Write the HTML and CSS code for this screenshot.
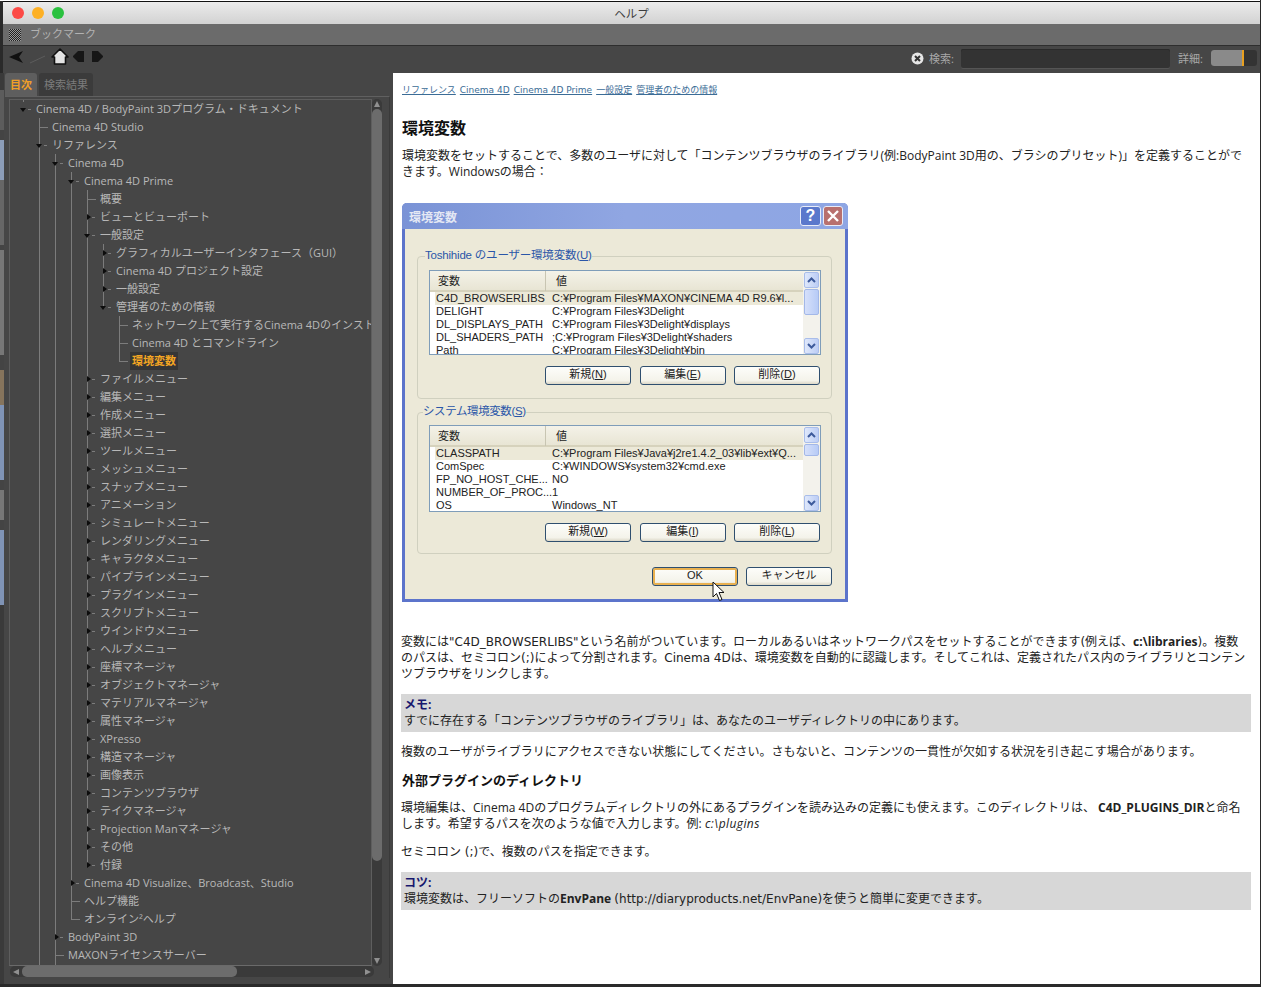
FILE: index.html
```html
<!DOCTYPE html>
<html lang="ja">
<head>
    <meta charset="UTF-8">
    <title>ヘルプ</title>
    <link rel="stylesheet" href="styles.css">
</head>
<body>
<div class="window">
    <div class="titlebar">
        <div class="lights"><span class="light red"></span><span class="light yellow"></span><span class="light green"></span></div>
        <div class="title-text">ヘルプ</div>
    </div>
    <div class="bookmarks"><span class="grip"></span><span>ブックマーク</span></div>
    <div class="toolbar">
        <svg class="nav-icons" width="100" height="20" viewBox="0 0 100 20">
            <path d="M1 9 L15 3 L11 9 L15 15 Z" fill="#111"/>
            <path d="M22 15 L37 8" stroke="#5c5c5c" stroke-width="1" fill="none"/>
            <path d="M52 1 L60 9 L57.5 9 L57.5 16 L46.5 16 L46.5 9 L44 9 Z" fill="#e4e4e4" stroke="#111" stroke-width="1.6" stroke-linejoin="round"/>
            <path d="M65 8 L70 3 L76 3 L76 14 L70 14 L65 9 Z" fill="#161616"/>
            <path d="M84 3 L90 3 L95 8 L95 9 L90 14 L84 14 Z" fill="#161616"/>
        </svg>
        <div class="search">
            <svg class="clear" width="13" height="13" viewBox="0 0 13 13"><circle cx="6.5" cy="6.5" r="6" fill="#e6e6e6"/><path d="M4 4 L9 9 M9 4 L4 9" stroke="#333" stroke-width="2"/></svg>
            <span class="search-label">検索:</span>
            <div class="search-input"></div>
            <span class="detail-label">詳細:</span>
            <div class="slider"><div class="slider-fill"></div></div>
        </div>
    </div>
    <div class="main">
        <div class="side">
            <div class="tabs">
                <div class="tab active">目次</div>
                <div class="tab">検索結果</div>
            </div>
            <div class="side-frame">
                <div class="tree-row">
                    <div class="tree-box">
                        <ul class="tree">
                            <li class="root"><div class="node open"><i></i>Cinema 4D / BodyPaint 3Dプログラム・ドキュメント</div>
                                <ul>
                                    <li><div class="node">Cinema 4D Studio</div></li>
                                    <li class="more"><div class="node open"><i></i>リファレンス</div>
                                        <ul>
                                            <li><div class="node open"><i></i>Cinema 4D</div>
                                                <ul>
                                                    <li><div class="node open"><i></i>Cinema 4D Prime</div>
                                                        <ul>
                                                            <li><div class="node">概要</div></li>
                                                            <li><div class="node closed"><i></i>ビューとビューポート</div></li>
                                                            <li><div class="node open"><i></i>一般設定</div>
                                                                <ul>
                                                                    <li><div class="node closed"><i></i>グラフィカルユーザーインタフェース（GUI）</div></li>
                                                                    <li><div class="node closed"><i></i>Cinema 4D プロジェクト設定</div></li>
                                                                    <li><div class="node closed"><i></i>一般設定</div></li>
                                                                    <li><div class="node open"><i></i>管理者のための情報</div>
                                                                        <ul>
                                                                            <li><div class="node">ネットワーク上で実行するCinema 4Dのインストール</div></li>
                                                                            <li><div class="node">Cinema 4D とコマンドライン</div></li>
                                                                            <li><div class="node"><span class="current">環境変数</span></div></li>
                                                                        </ul>
                                                                    </li>
                                                                </ul>
                                                            </li>
                                                            <li><div class="node closed"><i></i>ファイルメニュー</div></li>
                                                            <li><div class="node closed"><i></i>編集メニュー</div></li>
                                                            <li><div class="node closed"><i></i>作成メニュー</div></li>
                                                            <li><div class="node closed"><i></i>選択メニュー</div></li>
                                                            <li><div class="node closed"><i></i>ツールメニュー</div></li>
                                                            <li><div class="node closed"><i></i>メッシュメニュー</div></li>
                                                            <li><div class="node closed"><i></i>スナップメニュー</div></li>
                                                            <li><div class="node closed"><i></i>アニメーション</div></li>
                                                            <li><div class="node closed"><i></i>シミュレートメニュー</div></li>
                                                            <li><div class="node closed"><i></i>レンダリングメニュー</div></li>
                                                            <li><div class="node closed"><i></i>キャラクタメニュー</div></li>
                                                            <li><div class="node closed"><i></i>パイプラインメニュー</div></li>
                                                            <li><div class="node closed"><i></i>プラグインメニュー</div></li>
                                                            <li><div class="node closed"><i></i>スクリプトメニュー</div></li>
                                                            <li><div class="node closed"><i></i>ウインドウメニュー</div></li>
                                                            <li><div class="node closed"><i></i>ヘルプメニュー</div></li>
                                                            <li><div class="node closed"><i></i>座標マネージャ</div></li>
                                                            <li><div class="node closed"><i></i>オブジェクトマネージャ</div></li>
                                                            <li><div class="node closed"><i></i>マテリアルマネージャ</div></li>
                                                            <li><div class="node closed"><i></i>属性マネージャ</div></li>
                                                            <li><div class="node closed"><i></i>XPresso</div></li>
                                                            <li><div class="node closed"><i></i>構造マネージャ</div></li>
                                                            <li><div class="node closed"><i></i>画像表示</div></li>
                                                            <li><div class="node closed"><i></i>コンテンツブラウザ</div></li>
                                                            <li><div class="node closed"><i></i>テイクマネージャ</div></li>
                                                            <li><div class="node closed"><i></i>Projection Manマネージャ</div></li>
                                                            <li><div class="node closed"><i></i>その他</div></li>
                                                            <li><div class="node closed"><i></i>付録</div></li>
                                                        </ul>
                                                    </li>
                                                    <li><div class="node closed"><i></i>Cinema 4D Visualize、Broadcast、Studio</div></li>
                                                    <li><div class="node">ヘルプ機能</div></li>
                                                    <li><div class="node">オンライン²ヘルプ</div></li>
                                                </ul>
                                            </li>
                                            <li><div class="node closed"><i></i>BodyPaint 3D</div></li>
                                            <li class="more"><div class="node">MAXONライセンスサーバー</div></li>
                                        </ul>
                                    </li>
                                </ul>
                            </li>
                        </ul>
                    </div>
                    <div class="vscroll">
                        <span class="arrow up"></span>
                        <div class="vtrack"><div class="vthumb"></div></div>
                        <span class="arrow down"></span>
                    </div>
                </div>
                <div class="hscroll">
                    <span class="arrow left"></span>
                    <div class="htrack"><div class="hthumb"></div></div>
                    <span class="arrow right"></span>
                </div>
            </div>
        </div>
        <div class="page">
            <div class="crumbs"><a>リファレンス</a><a>Cinema 4D</a><a>Cinema 4D Prime</a><a>一般設定</a><a>管理者のための情報</a></div>
            <h2>環境変数</h2>
            <p class="intro">環境変数をセットすることで、多数のユーザに対して「コンテンツブラウザのライブラリ(例:BodyPaint 3D用の、ブラシのプリセット)」を定義することがで<br>きます。Windowsの場合：</p>

            <div class="dialog">
                <div class="dlg-title">
                    <span class="dlg-name">環境変数</span>
                    <span class="dlg-btn help">?</span>
                    <span class="dlg-btn close">
                        <svg width="14" height="14" viewBox="0 0 14 14"><path d="M2 2 L12 12 M12 2 L2 12" stroke="#fff" stroke-width="2.4"/></svg>
                    </span>
                </div>
                <div class="dlg-body">
                    <fieldset class="group">
                        <legend>Toshihide のユーザー環境変数(<u>U</u>)</legend>
                        <div class="list">
                            <div class="list-main">
                                <div class="list-head"><span>変数</span><span>値</span></div>
                                <div class="list-row sel"><span>C4D_BROWSERLIBS</span><span>C:¥Program Files¥MAXON¥CINEMA 4D R9.6¥l...</span></div>
                                <div class="list-row"><span>DELIGHT</span><span>C:¥Program Files¥3Delight</span></div>
                                <div class="list-row"><span>DL_DISPLAYS_PATH</span><span>C:¥Program Files¥3Delight¥displays</span></div>
                                <div class="list-row"><span>DL_SHADERS_PATH</span><span>;C:¥Program Files¥3Delight¥shaders</span></div>
                                <div class="list-row"><span>Path</span><span>C:¥Program Files¥3Delight¥bin</span></div>
                            </div>
                            <div class="xp-scroll">
                                <span class="xp-btn"><svg width="9" height="6" viewBox="0 0 9 6"><path d="M1 5 L4.500 1.500 L8 5" stroke="#3d5a9c" stroke-width="2" fill="none"/></svg></span>
                                <div class="xp-track"><div class="xp-thumb tall"></div></div>
                                <span class="xp-btn"><svg width="9" height="6" viewBox="0 0 9 6"><path d="M1 1 L4.500 4.500 L8 1" stroke="#3d5a9c" stroke-width="2" fill="none"/></svg></span>
                            </div>
                        </div>
                        <div class="btn-row">
                            <button class="xp">新規(<u>N</u>)</button>
                            <button class="xp">編集(<u>E</u>)</button>
                            <button class="xp">削除(<u>D</u>)</button>
                        </div>
                    </fieldset>
                    <fieldset class="group sys">
                        <legend>システム環境変数(<u>S</u>)</legend>
                        <div class="list">
                            <div class="list-main">
                                <div class="list-head"><span>変数</span><span>値</span></div>
                                <div class="list-row sel"><span>CLASSPATH</span><span>C:¥Program Files¥Java¥j2re1.4.2_03¥lib¥ext¥Q...</span></div>
                                <div class="list-row"><span>ComSpec</span><span>C:¥WINDOWS¥system32¥cmd.exe</span></div>
                                <div class="list-row"><span>FP_NO_HOST_CHE...</span><span>NO</span></div>
                                <div class="list-row"><span>NUMBER_OF_PROC...</span><span>1</span></div>
                                <div class="list-row"><span>OS</span><span>Windows_NT</span></div>
                            </div>
                            <div class="xp-scroll">
                                <span class="xp-btn"><svg width="9" height="6" viewBox="0 0 9 6"><path d="M1 5 L4.500 1.500 L8 5" stroke="#3d5a9c" stroke-width="2" fill="none"/></svg></span>
                                <div class="xp-track"><div class="xp-thumb"></div></div>
                                <span class="xp-btn"><svg width="9" height="6" viewBox="0 0 9 6"><path d="M1 1 L4.500 4.500 L8 1" stroke="#3d5a9c" stroke-width="2" fill="none"/></svg></span>
                            </div>
                        </div>
                        <div class="btn-row">
                            <button class="xp">新規(<u>W</u>)</button>
                            <button class="xp">編集(<u>I</u>)</button>
                            <button class="xp">削除(<u>L</u>)</button>
                        </div>
                    </fieldset>
                    <div class="dlg-foot">
                        <div class="ok-wrap">
                            <button class="xp default">OK</button>
                            <svg class="cursor" width="14" height="21" viewBox="0 0 14 21"><path d="M1 1 L1 16 L4.500 12.500 L7.500 19.500 L10 18.500 L7 11.500 L12 11.500 Z" fill="#fff" stroke="#111" stroke-width="1"/></svg>
                        </div>
                        <button class="xp">キャンセル</button>
                    </div>
                </div>
            </div>

            <p class="after-dialog wide">変数には"C4D_BROWSERLIBS"という名前がついています。ローカルあるいはネットワークパスをセットすることができます(例えば、<b>c:\libraries</b>)。複数<br>のパスは、セミコロン(;)によって分割されます。Cinema 4Dは、環境変数を自動的に認識します。そしてこれは、定義されたパス内のライブラリとコンテン<br>ツブラウザをリンクします。</p>

            <div class="note">
                <div class="note-title">メモ:</div>
                すでに存在する「コンテンツブラウザのライブラリ」は、あなたのユーザディレクトリの中にあります。
            </div>

            <p class="gap-s">複数のユーザがライブラリにアクセスできない状態にしてください。さもないと、コンテンツの一貫性が欠如する状況を引き起こす場合があります。</p>

            <h3>外部プラグインのディレクトリ</h3>

            <p class="gap-s">環境編集は、Cinema 4Dのプログラムディレクトリの外にあるプラグインを読み込みの定義にも使えます。このディレクトリは、 <b>C4D_PLUGINS_DIR</b>と命名<br>します。希望するパスを次のような値で入力します。例: <i>c:\plugins</i></p>

            <p class="gap-m wide">セミコロン (;)で、複数のパスを指定できます。</p>

            <div class="note">
                <div class="note-title">コツ:</div>
                環境変数は、フリーソフトの<b>EnvPane</b> <span class="wide">(http://diaryproducts.net/EnvPane)</span>を使うと簡単に変更できます。
            </div>
        </div>
    </div>
</div>
</body>
</html>
```

FILE: styles.css
```css
* {
    box-sizing: border-box;
}

html, body {
    margin: 0;
    height: 100%;
    overflow: hidden;
}

body {
    background: #2a2a2a;
    font-family: "Open Sans", "Noto Sans CJK JP", sans-serif;
    font-size: 12px;
}

.wide {
    font-family: "DejaVu Sans", "Noto Sans CJK JP", sans-serif;
}

.wide b {
    font-family: "Open Sans", "Noto Sans CJK JP", sans-serif;
}

.window {
    height: 984px;
    display: flex;
    flex-direction: column;
    border-top: 1px solid #fff;
    margin-right: 1px;
}

/* Title bar */
.titlebar {
    height: 23px;
    flex: none;
    display: flex;
    align-items: center;
    position: relative;
    margin-left: 3px;
    border-top: 1px solid #111;
    background: linear-gradient(#ebebeb, #d2d2d2);
}

.lights {
    display: flex;
    gap: 8px;
    padding-left: 9px;
}

.light {
    width: 12px;
    height: 12px;
    border-radius: 50%;
}

.red { background: #fc4a46; }
.yellow { background: #fdb024; }
.green { background: #2ac13f; }

.title-text {
    position: absolute;
    left: 0;
    right: 0;
    text-align: center;
    color: #3c3c3c;
    font-size: 11.500px;
}

.bookmarks {
    height: 22px;
    flex: none;
    display: flex;
    align-items: center;
    gap: 9px;
    margin-left: 3px;
    padding: 0 0 3px 6px;
    background: #6b6b6b;
    border-bottom: 1px solid #2e2e2e;
    color: #b2b2b2;
    font-size: 11px;
}

.grip {
    width: 12px;
    height: 12px;
    margin-top: 3px;
    background: repeating-conic-gradient(#222 0 25%, #9a9a9a 0 50%) 0 0 / 2px 2px;
}

.toolbar {
    height: 27px;
    flex: none;
    display: flex;
    justify-content: space-between;
    align-items: center;
    margin-left: 3px;
    padding: 0 3px 3px 5px;
    background: #464646;
}

.search {
    display: flex;
    align-items: center;
    color: #a8a8a8;
    font-size: 11px;
}

.clear {
    margin-right: 5px;
}

.search-label {
    width: 32px;
}

.search-input {
    width: 209px;
    height: 19px;
    background: #333;
    border-radius: 2px;
    box-shadow: inset 0 1px 0 #2a2a2a, 0 1px 0 #555;
}

.detail-label {
    width: 33px;
    margin-left: 8px;
}

.slider {
    width: 46px;
    height: 16px;
    background: #333;
    border-radius: 3px;
}

.slider-fill {
    width: 33px;
    height: 16px;
    background: #8a8a8a;
    border-right: 2px solid #e8a020;
    border-radius: 3px 0 0 3px;
}

/* Main split */
.main {
    flex: 1;
    min-height: 0;
    display: flex;
}

/* the sliver on the left is the desktop showing past the window */
.side {
    width: 393px;
    flex: none;
    display: flex;
    flex-direction: column;
    padding: 0 3px 6px 5px;
    background: linear-gradient(#3a3a3a 0 17px, #5c5c5c 17px 57px, #444 57px 67px, #8c9db8 67px 107px, #666 107px 172px, #444 172px 177px, #777 177px 282px, #444 282px 297px, #86745c 297px 332px, #7f93b5 332px 407px, #444 407px 417px, #777 417px 447px, #444 447px 457px, #7f93b5 457px 532px, #3a3a3a 532px) 0 0 / 4px 100% no-repeat #464646;
}

.tabs {
    height: 23px;
    flex: none;
    display: flex;
    gap: 2px;
    font-size: 11px;
}

.tab {
    padding: 3px 5px 0;
    background: #3b3b3b;
    color: #7b7b7b;
    border-radius: 3px 3px 0 0;
}

.tab.active {
    width: 32px;
    background: #5e5e5e;
    color: #f0a028;
    font-weight: bold;
}

.side-frame {
    flex: 1;
    min-height: 0;
    display: flex;
    flex-direction: column;
    border-top: 1px solid #606060;
    border-right: 1px solid #3a3a3a;
    padding: 2px 3px 0 4px;
}

.tree-row {
    flex: 1;
    min-height: 0;
    display: flex;
}

.tree-box {
    width: 363px;
    flex: none;
    overflow: hidden;
    border: 1px solid #5e5e5e;
    border-bottom-color: #6a6a6a;
    padding: 0 0 0 13px;
    color: #b8b8b8;
    font-size: 11px;
}

/* Tree */
.tree, .tree ul {
    list-style: none;
    margin: 0;
    padding: 0;
}

.tree ul {
    margin-left: 3px;
}

.tree li {
    position: relative;
    padding-left: 13px;
    white-space: nowrap;
}

.tree li::before {
    content: "";
    position: absolute;
    left: 0;
    top: 0;
    bottom: 0;
    width: 1px;
    background: #7c7c7c;
}

.tree li:last-child::before {
    bottom: auto;
    height: 9px;
}

.tree li.more::before {
    height: auto;
    bottom: -4px;
}

.tree li.root::before {
    height: 5px;
    bottom: auto;
    top: -3px;
}

.node {
    height: 18px;
    line-height: 18px;
    position: relative;
}

.node::before {
    content: "";
    position: absolute;
    left: -13px;
    top: 9px;
    width: 9px;
    height: 1px;
    background: #7c7c7c;
}

.node.open::before, .node.closed::before {
    left: -8px;
    width: 3px;
}

.node i {
    position: absolute;
    width: 0;
    height: 0;
    border-style: solid;
}

.node.open i {
    left: -16px;
    top: 8px;
    border-width: 4px 3px 0;
    border-color: #0c0c0c transparent transparent;
}

.node.closed i {
    left: -13px;
    top: 6px;
    border-width: 3.500px 0 3.500px 4px;
    border-color: transparent transparent transparent #0c0c0c;
}

.current {
    display: inline-block;
    height: 18px;
    padding: 0 2px;
    margin-left: -2px;
    background: #363636;
    color: #f5a623;
    font-weight: bold;
}

/* Scrollbars of the tree */
.vscroll {
    width: 10px;
    display: flex;
    flex-direction: column;
    align-items: center;
    background: #3a3a3a;
    border-radius: 5px;
    padding: 2px 0;
}

.vtrack {
    flex: 1;
    width: 100%;
}

.vthumb {
    height: 752px;
    background: #6c6c6c;
    border-radius: 5px;
    margin-top: 2px;
}

.hscroll {
    height: 11px;
    margin: 0 12px 1px 1px;
    display: flex;
    align-items: center;
    background: #3a3a3a;
    border-radius: 5px;
    padding: 0 3px;
}

.htrack {
    flex: 1;
}

.hthumb {
    width: 215px;
    height: 11px;
    margin-left: 3px;
    background: #6c6c6c;
    border-radius: 5px;
}

.arrow {
    width: 0;
    height: 0;
    flex: none;
    border-style: solid;
}

.arrow.up {
    border-width: 0 3px 6px;
    border-color: transparent transparent #909090;
}

.arrow.down {
    border-width: 6px 3px 0;
    border-color: #909090 transparent transparent;
}

.arrow.left {
    border-width: 3px 6px 3px 0;
    border-color: transparent #909090 transparent transparent;
}

.arrow.right {
    border-width: 3px 0 3px 6px;
    border-color: transparent transparent transparent #909090;
}

/* Help page */
.page {
    flex: 1;
    min-width: 0;
    background: #fff;
    padding: 10px 8px 0;
    color: #222;
    overflow: hidden;
}

.crumbs {
    height: 14px;
    display: flex;
    gap: 4px;
    padding-left: 1px;
    font-family: "DejaVu Sans", "Noto Sans CJK JP", sans-serif;
    font-size: 9px;
    line-height: 14px;
}

.crumbs a {
    color: #3b6c96;
    text-decoration: underline;
}

h2 {
    margin: 21px 0 0 1px;
    font-size: 16px;
    line-height: 20px;
    color: #111;
}

h3 {
    margin: 12px 0 0 1px;
    font-size: 13px;
    line-height: 16px;
    color: #111;
}

p {
    margin: 0;
    padding-top: 1px;
    line-height: 16px;
    white-space: nowrap;
}

p i {
    letter-spacing: 0.400px;
}

.intro {
    margin: 9px 0 0 1px;
}

.after-dialog {
    margin-top: 31px;
}

.gap-s {
    margin-top: 11px;
}

.gap-m {
    margin-top: 11px;
}

.note {
    margin-top: 12px;
    width: 850px;
    padding: 3px 3px 3px;
    background: #d7d7d7;
    line-height: 16px;
}

.note-title {
    color: #17176e;
    font-weight: bold;
}

/* Screenshot of the XP dialog inside the page */
.dialog {
    width: 446px;
    height: 399px;
    margin: 23px 0 0 1px;
    display: flex;
    flex-direction: column;
    background: #ece9d8;
    border: 3px solid #5c74cb;
    border-top: 0;
    border-radius: 5px 5px 0 0;
    font-family: "Liberation Sans", "Noto Sans CJK JP", sans-serif;
    font-size: 11px;
    color: #222;
}

.dlg-title {
    height: 26px;
    flex: none;
    display: flex;
    align-items: center;
    gap: 2px;
    padding: 0 5px 0 4px;
    margin: 0 -3px;
    background: linear-gradient(90deg, #7a93d6, #90a6e2 50%, #8ea6e4);
    border-radius: 5px 5px 0 0;
}

.dlg-name {
    flex: 1;
    padding-left: 3px;
    color: #e4e8f4;
    font-weight: bold;
    font-size: 12px;
}

.dlg-btn {
    width: 20px;
    height: 20px;
    display: flex;
    align-items: center;
    justify-content: center;
    border: 1px solid #e8ecf8;
    border-radius: 3px;
    color: #fff;
    font-size: 16px;
    font-weight: bold;
}

.help {
    width: 21px;
    background: #5a78cc;
}

.close { background: #b8706e; }

.dlg-body {
    flex: 1;
    padding: 20px 13px 0 12px;
}

.group {
    margin: 0;
    min-width: 0;
    height: 150px;
    padding: 7px 10px 0 11px;
    border: 1px solid #d0d0bf;
    border-radius: 4px;
}

.group.sys {
    margin-top: 6px;
    height: 149px;
    padding-top: 6px;
}

legend {
    margin-left: -4px;
    padding: 0;
    height: 14px;
    line-height: 12px;
    color: #2a56a8;
    font-size: 11.500px;
    letter-spacing: -0.200px;
}

.group.sys legend {
    margin-left: -6px;
    letter-spacing: -0.400px;
}

.list {
    height: 85px;
    display: flex;
    background: #fff;
    border: 1px solid #7f9db9;
    overflow: hidden;
}

.group.sys .list {
    height: 87px;
}

.list-main {
    flex: 1;
    min-width: 0;
    padding-left: 5px;
}

.list-head {
    height: 21px;
    display: grid;
    grid-template-columns: 107px 1fr;
    margin-left: -5px;
    padding-left: 8px;
    background: linear-gradient(#f4f2e8, #e8e5d4);
    border-bottom: 2px solid #d6d2bc;
    line-height: 20px;
}

.list-head span + span {
    border-left: 1px solid #c8c5b2;
    padding-left: 10px;
}

.list-row {
    height: 13px;
    display: grid;
    grid-template-columns: 116px 1fr;
    line-height: 13px;
    padding-left: 1px;
    white-space: nowrap;
    overflow: hidden;
}

.list-row.sel {
    background: #ece9d8;
}

.xp-scroll {
    width: 17px;
    flex: none;
    display: flex;
    flex-direction: column;
    background: #f3f2ec;
}

.xp-btn {
    height: 16px;
    flex: none;
    display: flex;
    align-items: center;
    justify-content: center;
    margin: 1px 1px 0;
    background: linear-gradient(90deg, #dfe8fb, #bccdf5);
    border: 1px solid #a9bdea;
    border-radius: 2px;
}

.xp-track {
    flex: 1;
    padding: 1px;
}

.xp-thumb {
    height: 12px;
    background: linear-gradient(90deg, #d6e0fa, #b7cbf6);
    border: 1px solid #a3b8e8;
    border-radius: 2px;
}

.xp-thumb.tall {
    height: 26px;
}

.btn-row {
    display: flex;
    justify-content: flex-end;
    gap: 8.500px;
    margin-top: 11px;
    padding-right: 1px;
}

button.xp {
    width: 86px;
    height: 19px;
    padding: 0 0 2px;
    font: inherit;
    line-height: 15px;
    color: #222;
    background: linear-gradient(#fdfdfa, #f4f3ea 80%, #dcd8c8);
    border: 1px solid #2f4f6f;
    border-radius: 3px;
}

button.default {
    box-shadow: inset 0 0 0 2px #e8b050;
}

.dlg-foot {
    display: flex;
    justify-content: flex-end;
    gap: 8px;
    margin-top: 13px;
}

.ok-wrap {
    position: relative;
    height: 19px;
}

.cursor {
    position: absolute;
    left: 60px;
    top: 14px;
}
```
